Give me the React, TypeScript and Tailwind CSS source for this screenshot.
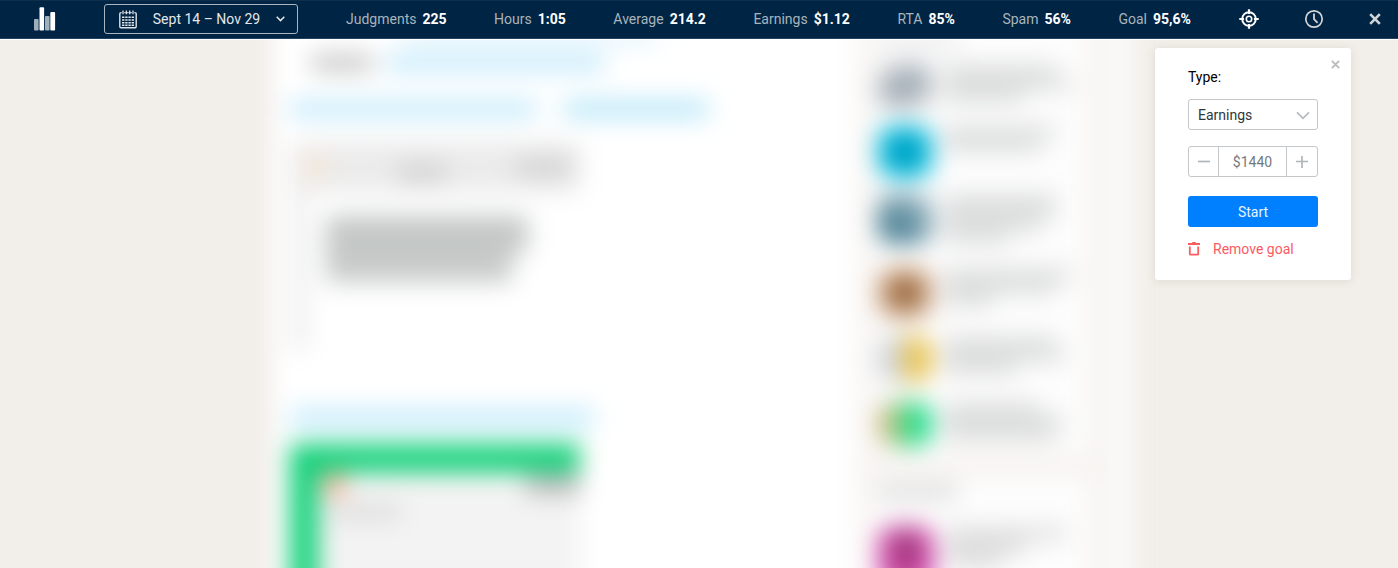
import { useState } from "react";

const stats = [
  { label: "Judgments", value: "225" },
  { label: "Hours", value: "1:05" },
  { label: "Average", value: "214.2" },
  { label: "Earnings", value: "$1.12" },
  { label: "RTA", value: "85%" },
  { label: "Spam", value: "56%" },
  { label: "Goal", value: "95,6%" },
];

function LogoIcon() {
  return (
    <svg width="22" height="24" viewBox="0 0 22 24" aria-hidden="true">
      <rect x="0" y="12" width="4.6" height="11.5" rx="1" fill="#9fb0ba" />
      <rect x="5.5" y="0.3" width="4.6" height="23.2" rx="1" fill="#fff" />
      <rect x="11" y="9" width="4.6" height="14.5" rx="1" fill="#9fb0ba" />
      <rect x="16.3" y="5" width="4.8" height="18.5" rx="1" fill="#fff" />
    </svg>
  );
}

function CalendarIcon() {
  return (
    <svg width="18" height="19" viewBox="0 0 18 19" fill="none" stroke="#dde3e6" aria-hidden="true">
      <path d="M2.6 2.6H2A1.2 1.2 0 0 0 .8 3.8v12.8A1.2 1.2 0 0 0 2 17.8h14a1.2 1.2 0 0 0 1.2-1.2V3.8A1.2 1.2 0 0 0 16 2.6h-.6M5.4 2.6h1.4M8.2 2.6h1.4M11 2.6h1.6" strokeWidth="1.4" />
      <path d="M4 .6v3.6M7.4.6v3.6M10.7.6v3.6M14 .6v3.6" strokeWidth="1.3" />
      <path d="M3 7.3h12M3 10h12M3 12.7h12M3 15.2h12" strokeWidth="1.6" strokeDasharray="2.4 0.8" />
    </svg>
  );
}

function TargetIcon() {
  return (
    <svg width="20" height="20" viewBox="0 0 20 20" fill="none" stroke="#fff" aria-hidden="true">
      <circle cx="10" cy="10" r="6.8" strokeWidth="1.9" />
      <circle cx="10" cy="10" r="2.7" strokeWidth="1.6" />
      <path d="M10 .3v4.8M10 14.9v4.8M.3 10h4.8M14.9 10h4.8" strokeWidth="2.2" />
    </svg>
  );
}

function ClockIcon() {
  return (
    <svg width="20" height="20" viewBox="0 0 20 20" fill="none" stroke="#d3d6d8" aria-hidden="true">
      <circle cx="10" cy="10" r="8.2" strokeWidth="1.7" />
      <path d="M10 4.6v5.6l3.6 3.6" strokeWidth="1.8" />
    </svg>
  );
}

function CrossIcon({ size, color, weight }: { size: number; color: string; weight: number }) {
  return (
    <svg width={size} height={size} viewBox="0 0 12 12" fill="none" stroke={color} strokeWidth={weight} aria-hidden="true">
      <path d="M1.2 1.2l9.6 9.6M10.8 1.2l-9.6 9.6" />
    </svg>
  );
}

function TrashIcon() {
  return (
    <svg width="12" height="14" viewBox="0 0 12 14" fill="none" stroke="#fb5a5f" aria-hidden="true">
      <path d="M0 2h12M4.2 .9h3.6" strokeWidth="1.8" />
      <path d="M1.8 4.6v7.1a1 1 0 0 0 1 1h6.4a1 1 0 0 0 1-1V4.6" strokeWidth="1.8" />
    </svg>
  );
}

function Toolbar() {
  return (
    <header className="relative z-10 border-b border-white bg-[#002444]">
      <div className="flex h-[39px] items-center border-t border-b border-t-[#0d2f4c] border-b-[#1f4262] pr-[17px] pb-px pl-[34px] whitespace-nowrap">
        <LogoIcon />
        <button
          type="button"
          aria-haspopup="dialog"
          className="ml-12 flex h-[30px] w-[194px] items-center justify-between rounded-[3px] border border-[#a9b6c0] pr-3 pl-3.5 text-sm text-[#e4e8eb]"
        >
          <CalendarIcon />
          <span>Sept 14 – Nov 29</span>
          <svg width="9" height="6" viewBox="0 0 9 6" fill="none" stroke="#e4e8eb" strokeWidth="1.5" aria-hidden="true">
            <path d="M.7.8l3.8 3.8L8.3.8" />
          </svg>
        </button>
        <div className="flex flex-1 justify-between px-12">
          {stats.map((s) => (
            <div key={s.label} className="flex gap-1.5 text-sm">
              <span className="text-[#a9b4bc]">{s.label}</span>
              <span className="font-bold text-white">{s.value}</span>
            </div>
          ))}
        </div>
        <div className="flex items-center gap-[45px]">
          <button type="button" aria-label="Goal settings">
            <TargetIcon />
          </button>
          <button type="button" aria-label="History">
            <ClockIcon />
          </button>
          <button type="button" aria-label="Close toolbar">
            <CrossIcon size={12} color="#d3d6d8" weight={2.6} />
          </button>
        </div>
      </div>
    </header>
  );
}

function GoalPanel() {
  const [type, setType] = useState("Earnings");
  const [amount, setAmount] = useState(1440);
  return (
    <section
      aria-label="Goal"
      className="absolute top-12 right-[47px] z-10 w-[196px] rounded-[3px] bg-white px-[33px] pt-[19px] pb-[21px] text-sm shadow-[0_1px_10px_rgba(90,70,50,0.12)]"
    >
      <button type="button" aria-label="Close panel" className="absolute top-3 right-[11px]">
        <CrossIcon size={9} color="#b9bdc0" weight={2.6} />
      </button>
      <label htmlFor="goal-type" className="block leading-5 text-black">
        Type:
      </label>
      <div className="relative mt-3">
        <select
          id="goal-type"
          value={type}
          onChange={(e) => setType(e.target.value)}
          className="h-[31px] w-full appearance-none rounded-[3px] border border-[#c3c7c9] bg-white pl-[9px] text-[#30363a]"
        >
          <option>Earnings</option>
          <option>Hours</option>
          <option>Judgments</option>
        </select>
        <svg
          className="pointer-events-none absolute top-3 right-2"
          width="14"
          height="9"
          viewBox="0 0 14 9"
          fill="none"
          stroke="#b4babd"
          strokeWidth="1.7"
          aria-hidden="true"
        >
          <path d="M1 1.4l6 6 6-6" />
        </svg>
      </div>
      <div className="mt-4 flex h-[31px] rounded-[3px] border border-[#c3c7c9]">
        <button
          type="button"
          aria-label="Decrease"
          onClick={() => setAmount(amount - 10)}
          className="flex w-[30px] items-center justify-center border-r border-[#c3c7c9]"
        >
          <svg width="12" height="12" viewBox="0 0 12 12" stroke="#b0b6b9" strokeWidth="1.7" aria-hidden="true">
            <path d="M0 5.5h12" />
          </svg>
        </button>
        <input
          aria-label="Goal amount"
          value={"$" + amount}
          onChange={(e) => setAmount(Number(e.target.value.replace(/\D/g, "")))}
          className="w-0 min-w-0 flex-1 text-center text-[#737a7f]"
        />
        <button
          type="button"
          aria-label="Increase"
          onClick={() => setAmount(amount + 10)}
          className="flex w-[31px] items-center justify-center border-l border-[#c3c7c9]"
        >
          <svg width="12" height="12" viewBox="0 0 12 12" stroke="#b0b6b9" strokeWidth="1.7" aria-hidden="true">
            <path d="M0 5.5h12M6 0v12" />
          </svg>
        </button>
      </div>
      <button type="button" className="mt-[19px] h-[31px] w-full rounded-[3px] bg-[#0080ff] text-[#e9f4ff]">
        Start
      </button>
      <button type="button" className="mt-3 flex items-center gap-[13px] leading-5 text-[#fb5a5f]">
        <TrashIcon />
        Remove goal
      </button>
    </section>
  );
}

const people = [
  { box: "mt-6 h-11", avatar: "bg-linear-to-br from-[#cecece] via-[#9eabb5] to-[#d0d0d0]", lines: ["w-28", "w-32", "w-20"] },
  { box: "mt-[18px] h-[52px]", avatar: "bg-radial from-[#008fb0] from-10% to-[#00c0e2] to-60%", lines: ["w-28", "w-24"] },
  { box: "mt-4 h-[50px]", avatar: "bg-linear-to-tr from-[#1f677f] to-[#a9c2cb]", lines: ["w-28", "w-28", "w-24", "w-16"] },
  { box: "mt-6 h-[50px]", avatar: "bg-radial from-[#764818] to-[#d9ae8c] to-70%", lines: ["w-32", "w-28", "w-12"] },
  { box: "mt-[18px] h-[46px]", avatar: "bg-linear-to-r from-[#d0d5da] from-35% to-[#e9c34c] to-60%", lines: ["w-28", "w-30", "w-18"] },
  { box: "mt-5 h-[44px]", avatar: "bg-linear-to-r from-[#e0ab78] to-[#1fdc8a] to-60%", lines: ["w-24", "w-30", "w-28"] },
];

function BlurredPage() {
  return (
    <div aria-hidden="true" className="-mt-10 flex justify-center pl-2 blur-[12px]">
      <div className="flex h-[640px] w-[862px] bg-[#fafaf9]">
        <div className="w-[586px] bg-white pt-8 pl-[18px]">
          <div className="ml-28 h-2.5 w-64 bg-[#d4effc]" />
          <div className="mt-3 ml-5 flex h-[18px] gap-3">
            <div className="w-16 rounded-lg bg-[#c8c8c8]" />
            <div className="w-[218px] bg-[#c7ebfb]" />
          </div>
          <div className="mt-7 flex h-[18px] gap-7">
            <div className="w-[246px] bg-[#c5ebfb]" />
            <div className="w-36 bg-[#b8e7f8]" />
          </div>
          <div className="mt-6 w-[290px] border-l-[18px] border-[#efefef]">
            <div className="-ml-3 flex h-[50px] items-center justify-between bg-[#ebebeb] px-2">
              <div className="size-6 rounded-full bg-[#f8e6d3]" />
              <div className="mt-3 h-4 w-12 bg-[#cecece]" />
              <div className="h-4 w-14 bg-[#cecece]" />
            </div>
            <div className="flex h-40 flex-col items-start bg-white pt-6 pl-[18px]">
              <div className="h-9 w-[202px] bg-[#c3c7c6]" />
              <div className="h-[30px] w-[186px] bg-[#c7cac9]" />
            </div>
          </div>
          <div className="mt-14 h-5 w-[304px] bg-[#c8ecfb]" />
          <div className="mt-4 h-52 w-[290px] border-t-[28px] border-l-[28px] border-[#0dd077] bg-[#f3f3f3]">
            <div className="flex items-center justify-between pl-1">
              <div className="size-6 rounded-full bg-[#f7a888]" />
              <div className="h-5 w-[54px] bg-[#b8b8b8]" />
            </div>
            <div className="mt-2 ml-3 h-4 w-[70px] bg-[#dcdcdc]" />
          </div>
        </div>
        <div className="flex w-[248px] flex-col bg-[#f6f2ef] pr-4 pl-3">
          <div className="h-[456px] bg-[#fdfdfd] pt-10 pl-2">
            <div className="-mt-0.5 h-2 w-20 bg-[#dcdcdc]" />
            <div className="-mt-1.5">
              {people.map((p, i) => (
                <div key={i} className={"flex gap-3 " + p.box}>
                  <div className={"h-full w-[54px] rounded-2xl " + p.avatar} />
                  <div className="flex flex-col">
                    {p.lines.map((w, j) => (
                      <div key={j} className={"h-[13px] bg-[#dcdddd] " + w} />
                    ))}
                  </div>
                </div>
              ))}
            </div>
          </div>
          <div className="mt-5 flex-1 bg-[#fdfdfd] pt-2.5 pl-2">
            <div className="h-3 w-20 bg-[#d4d4d4]" />
            <div className="mt-7 flex h-16 gap-3">
              <div className="w-[56px] rounded-2xl bg-radial-[at_50%_40%] from-[#963a70] from-10% to-[#f04fcb] to-80%" />
              <div className="flex flex-col">
                <div className="h-3.5 w-30 bg-[#dedede]" />
                <div className="h-3.5 w-20 bg-[#dedede]" />
                <div className="h-3.5 w-14 bg-[#dedede]" />
              </div>
            </div>
          </div>
        </div>
      </div>
    </div>
  );
}

export default function App() {
  return (
    <div className="relative h-screen overflow-hidden bg-[#f2eee9] font-[Roboto,sans-serif]">
      <Toolbar />
      <BlurredPage />
      <GoalPanel />
    </div>
  );
}
